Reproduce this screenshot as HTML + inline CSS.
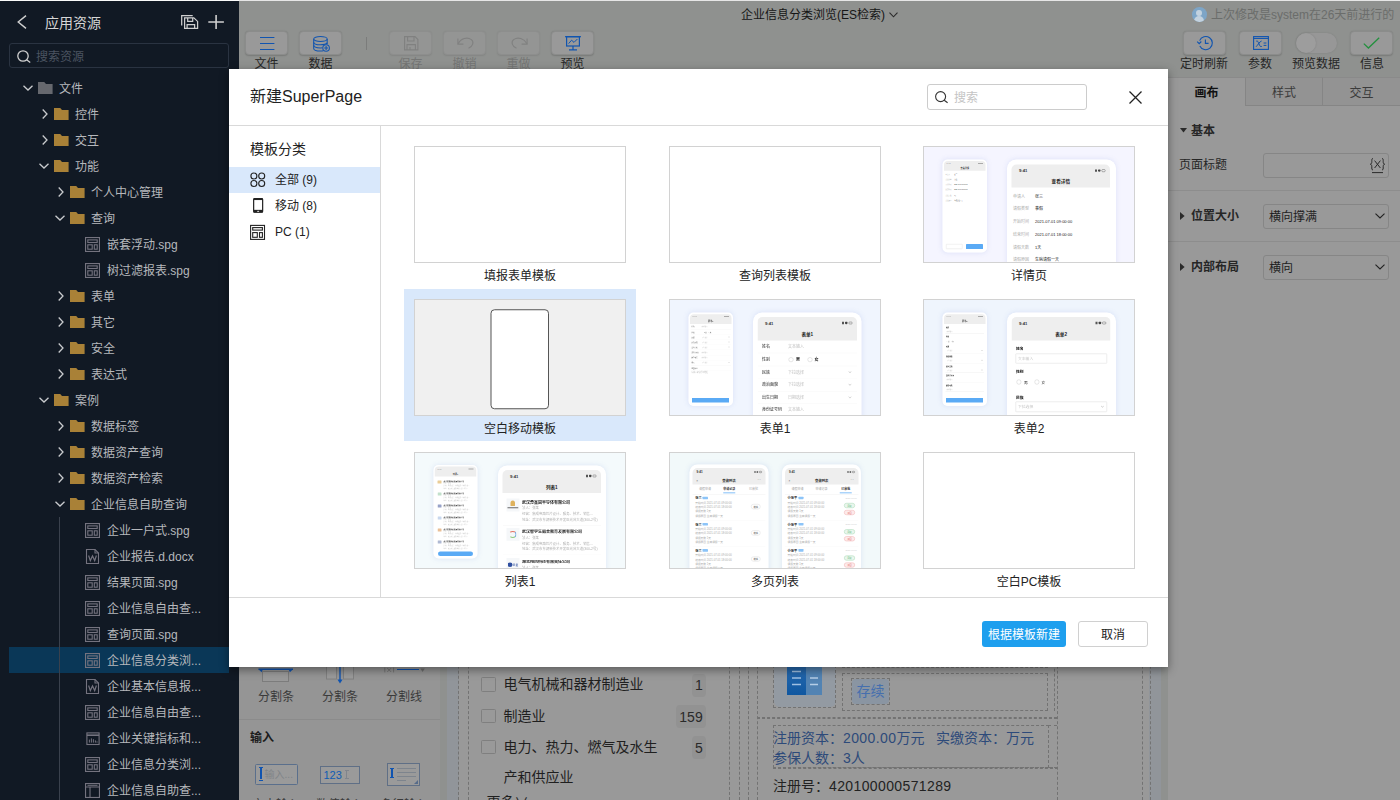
<!DOCTYPE html>
<html lang="zh-CN">
<head>
<meta charset="utf-8">
<title>新建SuperPage</title>
<style>
*{box-sizing:border-box;margin:0;padding:0}
html,body{width:1400px;height:800px;overflow:hidden}
body{position:relative;background:#8f918f;font-family:"Liberation Sans","Noto Sans CJK SC",sans-serif;font-size:12px;color:#333;line-height:1}
.abs{position:absolute}
svg{display:block;overflow:visible}
/* sidebar */
#sb{position:absolute;left:0;top:0;width:239px;height:800px;background:#111924;color:#c4c6c9;overflow:hidden}
#topline{position:absolute;left:0;top:0;width:1400px;height:1px;background:linear-gradient(90deg,#fafafa 0,#fafafa 239px,#e6e6e6 239px,#e6e6e6 100%);z-index:5}
.sbt{position:absolute;left:45px;top:15px;font-size:14px;line-height:16px;color:#d6d6d6}
.sbsearch{position:absolute;left:9px;top:43px;width:220px;height:25px;border:1px solid #2a3341;border-radius:3px}
.sbsearch span{position:absolute;left:26px;top:6px;font-size:12px;line-height:14px;color:#4b5461}
.row{position:absolute;left:9px;width:220px;height:26px}
.row.sel{background:#0a3757}
.row .t{position:absolute;top:7px;font-size:12px;line-height:14px;white-space:nowrap;color:#b6b8bc}
.row svg{position:absolute}
/* main */
.tb{position:absolute;top:31px;width:43px;height:23.5px;border:1px solid #8b8c8b;border-radius:4px;background:#999;box-shadow:0 0.5px 1.5px rgba(0,0,0,0.16)}
.tb.dis{background:#949594;border-color:#8d8e8d;box-shadow:0 0.5px 1.5px rgba(0,0,0,0.08)}
.tbl{position:absolute;top:57px;width:60px;text-align:center;font-size:12px;line-height:14px;color:#262626;white-space:nowrap}
.tbl.dis{color:#747574}
/* right panel */
#rp{position:absolute;left:1168px;top:77px;width:232px;height:723px;background:#999}
.tab{position:absolute;top:0;height:29px;font-size:12px;line-height:14px;text-align:center;padding-top:8px;color:#3b3b3b;border-top:1px solid #8a8a8a}
.tab.off{background:#939393;border-left:1px solid #858585;border-bottom:1px solid #858585}
.rlab{position:absolute;font-size:12px;line-height:14px;color:#262626;white-space:nowrap}
.rbox{position:absolute;left:95px;width:126px;height:25px;border:1px solid #868686;border-radius:3px;font-size:12px;line-height:14px;padding:5px 0 0 5px;color:#1f1f1f}
.rdiv{position:absolute;left:0;width:232px;height:1px;background:#8d8d8d}
/* modal */
#md{position:absolute;left:229px;top:69px;width:939px;height:598px;background:#fff;box-shadow:0 3px 9px rgba(0,0,0,0.42);z-index:10}
#md .title{position:absolute;left:21px;top:19px;font-size:16px;line-height:18px;color:#222;white-space:nowrap}
#md .hline{position:absolute;left:0;top:56px;width:939px;height:1px;background:#d9d9d9}
#md .fline{position:absolute;left:0;top:528px;width:939px;height:1px;background:#d9d9d9}
#md .vline{position:absolute;left:151px;top:57px;width:1px;height:471px;background:#d9d9d9}
#md .search{position:absolute;left:698px;top:15px;width:160px;height:26px;border:1px solid #ccc;border-radius:3px}
#md .search span{position:absolute;left:26px;top:6px;font-size:12px;line-height:14px;color:#c4c4c4}
.cat{position:absolute;left:0;width:151px;height:26px}
.cat.on{background:#d9e8fb}
.cat span{position:absolute;left:46px;top:6px;font-size:12px;line-height:14px;color:#222;white-space:nowrap}
.cat svg{position:absolute;left:21px;top:5px}
.card{position:absolute;width:232px;height:152px}
.card.on{background:#d9e8fb}
.card .th{position:absolute;left:10px;top:10px;width:212px;height:117px;border:1px solid #d2d2d2;background:#fff;overflow:hidden}
.card .lb{position:absolute;left:0;top:133px;width:232px;text-align:center;font-size:12px;line-height:14px;color:#222}
.btn{position:absolute;top:552px;height:26px;border-radius:3px;font-size:12px;line-height:14px;text-align:center;padding-top:7px}
/* thumbs */
.th div,.th span{position:absolute;white-space:nowrap}
.sc{left:0;top:0;width:840px;height:460px;transform:scale(0.25);transform-origin:0 0}
.ph{background:#fff;box-shadow:0 0 22px rgba(110,135,215,0.17)}
.hd{background:#eee}
/* below modal */
#cp{position:absolute;left:239px;top:600px;width:201px;height:200px;background:#959595}
.cpl{position:absolute;width:64px;text-align:center;font-size:12px;line-height:14px;color:#3a3a3a;white-space:nowrap}
#cv{position:absolute;left:447px;top:600px;width:714px;height:200px;background:#999;overflow:hidden}
.dv{position:absolute;top:0;width:0;height:200px;border-left:1px dashed #737373}
.ck{position:absolute;left:34px;width:14.5px;height:14.5px;border:1px solid #7f7f7f;border-radius:1.5px;background:#999}
.ckt{position:absolute;left:56.5px;font-size:14px;line-height:16px;color:#1f1f1f;white-space:nowrap}
.bdg{position:absolute;height:23px;border-radius:4px;background:#929292;font-size:14px;line-height:16px;color:#2a2a2a;padding:3.5px 0 0 0;text-align:center}
.dbox{position:absolute;border:1px dashed #737373}
</style>
</head>
<body>
<div id="topline"></div>
<div id="sb">
<svg class="abs" style="left:17px;top:15px" width="10" height="14" viewBox="0 0 10 14"><path d="M9 0.6L1.2 7L9 13.4" fill="none" stroke="#d0d0d0" stroke-width="1.4"/></svg>
<div class="sbt">应用资源</div>
<svg class="abs" style="left:181px;top:15px" width="17" height="14" viewBox="0 0 17 14" fill="none" stroke="#cfcfcf" stroke-width="1.25"><path d="M0.7 10.4V0.7H11.7"/><path d="M3.6 2.9H12.8L16.6 6.4V13.4H3.6Z"/><path d="M6.7 2.9V6.3H11.7V2.9"/><path d="M6.1 13.4V9.7H13.6V13.4"/></svg>
<svg class="abs" style="left:208px;top:14px" width="16" height="16" viewBox="0 0 16 16"><path d="M8.1 1.1V15M0.3 8H15.9" stroke="#cfcfcf" stroke-width="1.6"/></svg>
<div class="sbsearch"><svg class="abs" style="left:7px;top:6px" width="14" height="13" viewBox="0 0 14 13" fill="none" stroke="#d0d0d0" stroke-width="1.3"><circle cx="6" cy="6" r="5.2"/><path d="M9.6 9.8L13.2 12.6"/></svg><span>搜索资源</span></div>
<div class="abs" style="left:59px;top:517px;width:1px;height:283px;background:#3a414d;z-index:2"></div>
<div class="row" style="top:75px"><svg style="left:14px;top:10px" width="10" height="6" viewBox="0 0 10 6"><path d="M0.5 0.7L5 5L9.5 0.7" fill="none" stroke="#c9cbce" stroke-width="1.3"/></svg><svg style="left:28.8px;top:7px" width="15" height="12" viewBox="0 0 15 12"><path d="M0 0H6.2L8 2H14.6V12H0Z" fill="#66686e"/></svg><span class="t" style="left:50px">文件</span></div>
<div class="row" style="top:101px"><svg style="left:32.8px;top:8px" width="6" height="10" viewBox="0 0 6 10"><path d="M0.7 0.5L5 5L0.7 9.5" fill="none" stroke="#c9cbce" stroke-width="1.3"/></svg><svg style="left:44.8px;top:7px" width="15" height="12" viewBox="0 0 15 12"><path d="M0 0H6.2L8 2H14.6V12H0Z" fill="#a98137"/></svg><span class="t" style="left:66px">控件</span></div>
<div class="row" style="top:127px"><svg style="left:32.8px;top:8px" width="6" height="10" viewBox="0 0 6 10"><path d="M0.7 0.5L5 5L0.7 9.5" fill="none" stroke="#c9cbce" stroke-width="1.3"/></svg><svg style="left:44.8px;top:7px" width="15" height="12" viewBox="0 0 15 12"><path d="M0 0H6.2L8 2H14.6V12H0Z" fill="#a98137"/></svg><span class="t" style="left:66px">交互</span></div>
<div class="row" style="top:153px"><svg style="left:30px;top:10px" width="10" height="6" viewBox="0 0 10 6"><path d="M0.5 0.7L5 5L9.5 0.7" fill="none" stroke="#c9cbce" stroke-width="1.3"/></svg><svg style="left:44.8px;top:7px" width="15" height="12" viewBox="0 0 15 12"><path d="M0 0H6.2L8 2H14.6V12H0Z" fill="#a98137"/></svg><span class="t" style="left:66px">功能</span></div>
<div class="row" style="top:179px"><svg style="left:48.8px;top:8px" width="6" height="10" viewBox="0 0 6 10"><path d="M0.7 0.5L5 5L0.7 9.5" fill="none" stroke="#c9cbce" stroke-width="1.3"/></svg><svg style="left:60.8px;top:7px" width="15" height="12" viewBox="0 0 15 12"><path d="M0 0H6.2L8 2H14.6V12H0Z" fill="#a98137"/></svg><span class="t" style="left:82px">个人中心管理</span></div>
<div class="row" style="top:205px"><svg style="left:46px;top:10px" width="10" height="6" viewBox="0 0 10 6"><path d="M0.5 0.7L5 5L9.5 0.7" fill="none" stroke="#c9cbce" stroke-width="1.3"/></svg><svg style="left:60.8px;top:7px" width="15" height="12" viewBox="0 0 15 12"><path d="M0 0H6.2L8 2H14.6V12H0Z" fill="#a98137"/></svg><span class="t" style="left:82px">查询</span></div>
<div class="row" style="top:231px"><svg style="left:76px;top:6px" width="15" height="15" viewBox="0 0 15 15" fill="none" stroke="#74737f" stroke-width="1.1"><rect x="0.55" y="0.55" width="13.9" height="13.9"/><rect x="2.8" y="2.9" width="9.4" height="2.6"/><rect x="2.8" y="7.8" width="4.4" height="4.4"/><rect x="9.3" y="7.8" width="2.9" height="4.4"/></svg><span class="t" style="left:98px">嵌套浮动.spg</span></div>
<div class="row" style="top:257px"><svg style="left:76px;top:6px" width="15" height="15" viewBox="0 0 15 15" fill="none" stroke="#74737f" stroke-width="1.1"><rect x="0.55" y="0.55" width="13.9" height="13.9"/><rect x="2.8" y="2.9" width="9.4" height="2.6"/><rect x="2.8" y="7.8" width="4.4" height="4.4"/><rect x="9.3" y="7.8" width="2.9" height="4.4"/></svg><span class="t" style="left:98px">树过滤报表.spg</span></div>
<div class="row" style="top:283px"><svg style="left:48.8px;top:8px" width="6" height="10" viewBox="0 0 6 10"><path d="M0.7 0.5L5 5L0.7 9.5" fill="none" stroke="#c9cbce" stroke-width="1.3"/></svg><svg style="left:60.8px;top:7px" width="15" height="12" viewBox="0 0 15 12"><path d="M0 0H6.2L8 2H14.6V12H0Z" fill="#a98137"/></svg><span class="t" style="left:82px">表单</span></div>
<div class="row" style="top:309px"><svg style="left:48.8px;top:8px" width="6" height="10" viewBox="0 0 6 10"><path d="M0.7 0.5L5 5L0.7 9.5" fill="none" stroke="#c9cbce" stroke-width="1.3"/></svg><svg style="left:60.8px;top:7px" width="15" height="12" viewBox="0 0 15 12"><path d="M0 0H6.2L8 2H14.6V12H0Z" fill="#a98137"/></svg><span class="t" style="left:82px">其它</span></div>
<div class="row" style="top:335px"><svg style="left:48.8px;top:8px" width="6" height="10" viewBox="0 0 6 10"><path d="M0.7 0.5L5 5L0.7 9.5" fill="none" stroke="#c9cbce" stroke-width="1.3"/></svg><svg style="left:60.8px;top:7px" width="15" height="12" viewBox="0 0 15 12"><path d="M0 0H6.2L8 2H14.6V12H0Z" fill="#a98137"/></svg><span class="t" style="left:82px">安全</span></div>
<div class="row" style="top:361px"><svg style="left:48.8px;top:8px" width="6" height="10" viewBox="0 0 6 10"><path d="M0.7 0.5L5 5L0.7 9.5" fill="none" stroke="#c9cbce" stroke-width="1.3"/></svg><svg style="left:60.8px;top:7px" width="15" height="12" viewBox="0 0 15 12"><path d="M0 0H6.2L8 2H14.6V12H0Z" fill="#a98137"/></svg><span class="t" style="left:82px">表达式</span></div>
<div class="row" style="top:387px"><svg style="left:30px;top:10px" width="10" height="6" viewBox="0 0 10 6"><path d="M0.5 0.7L5 5L9.5 0.7" fill="none" stroke="#c9cbce" stroke-width="1.3"/></svg><svg style="left:44.8px;top:7px" width="15" height="12" viewBox="0 0 15 12"><path d="M0 0H6.2L8 2H14.6V12H0Z" fill="#a98137"/></svg><span class="t" style="left:66px">案例</span></div>
<div class="row" style="top:413px"><svg style="left:48.8px;top:8px" width="6" height="10" viewBox="0 0 6 10"><path d="M0.7 0.5L5 5L0.7 9.5" fill="none" stroke="#c9cbce" stroke-width="1.3"/></svg><svg style="left:60.8px;top:7px" width="15" height="12" viewBox="0 0 15 12"><path d="M0 0H6.2L8 2H14.6V12H0Z" fill="#a98137"/></svg><span class="t" style="left:82px">数据标签</span></div>
<div class="row" style="top:439px"><svg style="left:48.8px;top:8px" width="6" height="10" viewBox="0 0 6 10"><path d="M0.7 0.5L5 5L0.7 9.5" fill="none" stroke="#c9cbce" stroke-width="1.3"/></svg><svg style="left:60.8px;top:7px" width="15" height="12" viewBox="0 0 15 12"><path d="M0 0H6.2L8 2H14.6V12H0Z" fill="#a98137"/></svg><span class="t" style="left:82px">数据资产查询</span></div>
<div class="row" style="top:465px"><svg style="left:48.8px;top:8px" width="6" height="10" viewBox="0 0 6 10"><path d="M0.7 0.5L5 5L0.7 9.5" fill="none" stroke="#c9cbce" stroke-width="1.3"/></svg><svg style="left:60.8px;top:7px" width="15" height="12" viewBox="0 0 15 12"><path d="M0 0H6.2L8 2H14.6V12H0Z" fill="#a98137"/></svg><span class="t" style="left:82px">数据资产检索</span></div>
<div class="row" style="top:491px"><svg style="left:46px;top:10px" width="10" height="6" viewBox="0 0 10 6"><path d="M0.5 0.7L5 5L9.5 0.7" fill="none" stroke="#c9cbce" stroke-width="1.3"/></svg><svg style="left:60.8px;top:7px" width="15" height="12" viewBox="0 0 15 12"><path d="M0 0H6.2L8 2H14.6V12H0Z" fill="#a98137"/></svg><span class="t" style="left:82px">企业信息自助查询</span></div>
<div class="row" style="top:517px"><svg style="left:76px;top:6px" width="15" height="15" viewBox="0 0 15 15" fill="none" stroke="#74737f" stroke-width="1.1"><rect x="0.55" y="0.55" width="13.9" height="13.9"/><rect x="2.8" y="2.9" width="9.4" height="2.6"/><rect x="2.8" y="7.8" width="4.4" height="4.4"/><rect x="9.3" y="7.8" width="2.9" height="4.4"/></svg><span class="t" style="left:98px">企业一户式.spg</span></div>
<div class="row" style="top:543px"><svg style="left:76px;top:6px" width="15" height="15" viewBox="0 0 15 15" fill="none" stroke="#74737f" stroke-width="1.1"><path d="M1.5 0.55H10L13.5 4V14.45H1.5Z"/><path d="M10 0.55V4H13.5" /><path d="M3.6 6.5L5.3 11.6L7.5 7L9.7 11.6L11.4 6.5" stroke-width="1.2"/></svg><span class="t" style="left:98px">企业报告.d.docx</span></div>
<div class="row" style="top:569px"><svg style="left:76px;top:6px" width="15" height="15" viewBox="0 0 15 15" fill="none" stroke="#74737f" stroke-width="1.1"><rect x="0.55" y="0.55" width="13.9" height="13.9"/><rect x="2.8" y="2.9" width="9.4" height="2.6"/><rect x="2.8" y="7.8" width="4.4" height="4.4"/><rect x="9.3" y="7.8" width="2.9" height="4.4"/></svg><span class="t" style="left:98px">结果页面.spg</span></div>
<div class="row" style="top:595px"><svg style="left:76px;top:6px" width="15" height="15" viewBox="0 0 15 15" fill="none" stroke="#74737f" stroke-width="1.1"><rect x="0.55" y="0.55" width="13.9" height="13.9"/><rect x="2.8" y="2.9" width="9.4" height="2.6"/><rect x="2.8" y="7.8" width="4.4" height="4.4"/><rect x="9.3" y="7.8" width="2.9" height="4.4"/></svg><span class="t" style="left:98px">企业信息自由查...</span></div>
<div class="row" style="top:621px"><svg style="left:76px;top:6px" width="15" height="15" viewBox="0 0 15 15" fill="none" stroke="#74737f" stroke-width="1.1"><rect x="0.55" y="0.55" width="13.9" height="13.9"/><rect x="2.8" y="2.9" width="9.4" height="2.6"/><rect x="2.8" y="7.8" width="4.4" height="4.4"/><rect x="9.3" y="7.8" width="2.9" height="4.4"/></svg><span class="t" style="left:98px">查询页面.spg</span></div>
<div class="row sel" style="top:647px"><svg style="left:76px;top:6px" width="15" height="15" viewBox="0 0 15 15" fill="none" stroke="#74737f" stroke-width="1.1"><rect x="0.55" y="0.55" width="13.9" height="13.9"/><rect x="2.8" y="2.9" width="9.4" height="2.6"/><rect x="2.8" y="7.8" width="4.4" height="4.4"/><rect x="9.3" y="7.8" width="2.9" height="4.4"/></svg><span class="t" style="left:98px">企业信息分类浏...</span></div>
<div class="row" style="top:673px"><svg style="left:76px;top:6px" width="15" height="15" viewBox="0 0 15 15" fill="none" stroke="#74737f" stroke-width="1.1"><path d="M1.5 0.55H10L13.5 4V14.45H1.5Z"/><path d="M10 0.55V4H13.5" /><path d="M3.6 6.5L5.3 11.6L7.5 7L9.7 11.6L11.4 6.5" stroke-width="1.2"/></svg><span class="t" style="left:98px">企业基本信息报...</span></div>
<div class="row" style="top:699px"><svg style="left:76px;top:6px" width="15" height="15" viewBox="0 0 15 15" fill="none" stroke="#74737f" stroke-width="1.1"><rect x="0.55" y="0.55" width="13.9" height="13.9"/><rect x="2.8" y="2.9" width="9.4" height="2.6"/><rect x="2.8" y="7.8" width="4.4" height="4.4"/><rect x="9.3" y="7.8" width="2.9" height="4.4"/></svg><span class="t" style="left:98px">企业信息自由查...</span></div>
<div class="row" style="top:725px"><svg style="left:76px;top:6px" width="15" height="15" viewBox="0 0 15 15" fill="none" stroke="#74737f" stroke-width="1.1"><rect x="1.9" y="1.9" width="12.2" height="11.6"/><path d="M1.9 4.2H14.1" stroke-width="1.6"/><path d="M4.4 11.6V8.6M6.4 11.6V7.4M8.4 11.6V8.2M10.4 11.6V9.4M12 11.6V10.4" stroke-width="1"/></svg><span class="t" style="left:98px">企业关键指标和...</span></div>
<div class="row" style="top:751px"><svg style="left:76px;top:6px" width="15" height="15" viewBox="0 0 15 15" fill="none" stroke="#74737f" stroke-width="1.1"><rect x="0.55" y="0.55" width="13.9" height="13.9"/><rect x="2.8" y="2.9" width="9.4" height="2.6"/><rect x="2.8" y="7.8" width="4.4" height="4.4"/><rect x="9.3" y="7.8" width="2.9" height="4.4"/></svg><span class="t" style="left:98px">企业信息分类浏...</span></div>
<div class="row" style="top:777px"><svg style="left:76px;top:6px" width="15" height="15" viewBox="0 0 15 15" fill="none" stroke="#74737f" stroke-width="1.1"><rect x="0.55" y="0.55" width="13.9" height="13.9"/><path d="M0.5 4H14.5M5 4V14.5"/><path d="M2.5 2.3H12.5" stroke-width="1"/></svg><span class="t" style="left:98px">企业信息自助查...</span></div>
</div>
<div id="main">
<!-- title -->
<div class="abs" style="left:741px;top:8px;font-size:12px;line-height:14px;color:#161616;white-space:nowrap">企业信息分类浏览(ES检索)</div>
<svg class="abs" style="left:888.5px;top:11.5px" width="9" height="6" viewBox="0 0 9 6"><path d="M0.5 0.6L4.5 4.8L8.5 0.6" fill="none" stroke="#2a2a2a" stroke-width="1.1"/></svg>
<!-- left toolbar -->
<div class="tb" style="left:245px"><svg class="abs" style="left:14px;top:4px" width="15" height="15" viewBox="0 0 15 15"><path d="M0 1.5H14.4M0 7.5H14.4M0 13.5H14.4" stroke="#1054b0" stroke-width="1.05"/></svg></div>
<div class="tbl" style="left:236.5px">文件</div>
<div class="tb" style="left:299px"><svg class="abs" style="left:12.5px;top:3.5px" width="17" height="16" viewBox="0 0 17 16" fill="none" stroke="#1054b0" stroke-width="1.05"><ellipse cx="7.45" cy="3" rx="6.75" ry="2.5"/><path d="M0.7 3V12.4C0.7 13.8 3.6 15 7.45 15C8.6 15 9.6 14.9 10.4 14.7"/><path d="M14.2 3V8.2"/><path d="M0.7 6.2C0.7 7.6 3.6 8.8 7.45 8.8C10.6 8.8 13.2 8.1 14.2 6.9"/><path d="M0.7 9.3C0.7 10.7 3.6 11.9 7.45 11.9C8.2 11.9 8.9 11.85 9.5 11.8"/><circle cx="13.1" cy="12" r="3.3" fill="#999"/><path d="M13.1 10.1V13.9M11.2 12H15"/></svg></div>
<div class="tbl" style="left:290.5px">数据</div>
<div class="abs" style="left:366px;top:37px;width:1px;height:13px;background:#7b7c7b"></div>
<div class="tb dis" style="left:389px"><svg class="abs" style="left:14px;top:3.8px" width="15" height="15" viewBox="0 0 15 15" fill="none" stroke="#808180" stroke-width="1.1"><path d="M0.6 0.6H11L13.9 3.5V13.9H0.6Z"/><path d="M3.6 0.6V5H10V0.6"/><path d="M3 13.9V8.6H11.4V13.9"/><path d="M6 11V13.9"/></svg></div>
<div class="tbl dis" style="left:380.5px">保存</div>
<div class="tb dis" style="left:443px"><svg class="abs" style="left:13px;top:5px" width="17" height="12" viewBox="0 0 17 12" fill="none" stroke="#808180" stroke-width="1.1"><path d="M1 6.8C4 1.5 10 -0.5 14.4 2.6C17.2 5 16 9.5 11.5 11.2"/><path d="M0.9 1.6V7.1H6.4"/></svg></div>
<div class="tbl dis" style="left:434.5px">撤销</div>
<div class="tb dis" style="left:497px"><svg class="abs" style="left:13px;top:5px" width="17" height="12" viewBox="0 0 17 12" fill="none" stroke="#808180" stroke-width="1.1"><path d="M16 6.8C13 1.5 7 -0.5 2.6 2.6C-0.2 5 1 9.5 5.5 11.2"/><path d="M16.1 1.6V7.1H10.6"/></svg></div>
<div class="tbl dis" style="left:488.5px">重做</div>
<div class="tb" style="left:551px"><svg class="abs" style="left:13.3px;top:3.8px" width="16" height="15" viewBox="0 0 16 15" fill="none" stroke="#1054b0" stroke-width="1.2"><path d="M0 0.7H16"/><rect x="1.6" y="0.7" width="12.8" height="9.3"/><path d="M8 10V13.6M4 13.9H12"/><path d="M3.6 7.6L6.6 4.2L9 6.4L12.4 3" stroke-width="1"/></svg></div>
<div class="tbl" style="left:542.5px">预览</div>
<!-- right header -->
<div class="abs" style="left:1192px;top:7.3px;width:14.6px;height:14.6px;border-radius:50%;background:#7da5c7;overflow:hidden"><div class="abs" style="left:4.4px;top:2.6px;width:5.8px;height:5.8px;border-radius:50%;background:#c3d2df"></div><div class="abs" style="left:2.2px;top:8.6px;width:10.2px;height:8px;border-radius:5px 5px 0 0;background:#c3d2df"></div></div>
<div class="abs" style="left:1211px;top:8px;font-size:12px;line-height:14px;color:#6b6d6b;white-space:nowrap">上次修改是system在26天前进行的</div>
<div class="tb" style="left:1182.5px"><svg class="abs" style="left:12.5px;top:3px" width="17" height="16" viewBox="0 0 17 16" fill="none" stroke="#1054b0" stroke-width="1.1"><path d="M3.6 5.6A6.6 6.6 0 1 1 3.8 11"/><path d="M1.2 6.6L3.2 8.7L5.3 6.5"/><path d="M9.4 4.4V8.4H12.6"/></svg></div>
<div class="tbl" style="left:1174px">定时刷新</div>
<div class="tb" style="left:1238.5px"><svg class="abs" style="left:13.5px;top:4px" width="16" height="14" viewBox="0 0 16 14" fill="none" stroke="#1054b0" stroke-width="1.1"><rect x="0.6" y="0.6" width="14.8" height="12.8"/><path d="M0.6 2.4H15.4"/><path d="M3.2 5.2C4.6 4.2 5.2 6 6 8C6.8 10 7.4 11.2 8.8 10.4M8.6 5C6.6 5.4 5 9 3 10.8" stroke-width="1"/><path d="M10.6 7H13.4M10.6 9.4H13.4" stroke-width="1"/></svg></div>
<div class="tbl" style="left:1230px">参数</div>
<div class="abs" style="left:1295.5px;top:33px;width:41px;height:20px;border-radius:10px;background:#979797;box-shadow:0 0 2px rgba(0,0,0,0.12)"><div class="abs" style="left:0;top:0;width:20px;height:20px;border-radius:50%;background:#9d9d9d;box-shadow:0 0 2px rgba(0,0,0,0.15)"></div></div>
<div class="tbl" style="left:1286px">预览数据</div>
<div class="tb" style="left:1350px"><svg class="abs" style="left:12px;top:5px" width="17" height="12" viewBox="0 0 17 12" fill="none"><path d="M0.8 6.6L5.4 11L16.2 0.8" stroke="#24903f" stroke-width="1.3"/></svg></div>
<div class="tbl" style="left:1342px">信息</div>
</div>
<div id="cp">
<!-- icons row (top cut by modal) -->
<svg class="abs" style="left:19px;top:60px" width="36" height="24" viewBox="0 0 36 24" fill="none"><path d="M0.5 9.3H35" stroke="#1054b0" stroke-width="1.4"/><path d="M0.5 9.3H5L3.6 12.2ZM35 9.3H30.5L31.9 12.2Z" fill="#1054b0"/><rect x="4.5" y="11.5" width="26" height="10" stroke="#7c7c7c" stroke-width="1" fill="#9a9a9a"/></svg>
<svg class="abs" style="left:86px;top:56px" width="30" height="28" viewBox="0 0 30 28" fill="none"><rect x="1.5" y="0.5" width="10" height="22.5" stroke="#808080" fill="#9b9b9b"/><rect x="18.5" y="0.5" width="10" height="22.5" stroke="#808080" fill="#9b9b9b"/><path d="M15 0V25" stroke="#1054b0" stroke-width="1.4"/><path d="M12.4 23.6H17.6L15 27.6Z" fill="#1054b0"/></svg>
<svg class="abs" style="left:145px;top:65px" width="42" height="10" viewBox="0 0 42 10" fill="none"><path d="M13 4.5H35" stroke="#1054b0" stroke-width="1"/><path d="M36.4 3.6H40.8L38.6 7Z" fill="#707070"/><path d="M0.8 2.6V7.4M9.6 2.6V7.4M3.2 3L7.2 7M7.2 3L3.2 7" stroke="#737373" stroke-width="0.9"/></svg>
<div class="cpl" style="left:5px;top:90px">分割条</div>
<div class="cpl" style="left:69px;top:90px">分割条</div>
<div class="cpl" style="left:133px;top:90px">分割线</div>
<div class="abs" style="left:0;top:119px;width:201px;height:1px;background:#8b8b8b"></div>
<div class="abs" style="left:11px;top:131px;font-size:12px;line-height:14px;font-weight:bold;color:#1c1c1c">输入</div>
<!-- input icons -->
<div class="abs" style="left:16px;top:164px;width:42.5px;height:20.5px;border:1.3px solid #5a6f8c;border-radius:1.5px;background:#9a9a9a"><div class="abs" style="left:2.6px;top:2.2px;width:4.4px;height:13.4px;border-top:1.6px solid #1054b0;border-bottom:1.6px solid #1054b0"><div class="abs" style="left:1.2px;top:0;width:2px;height:10.4px;background:#1054b0"></div></div><span class="abs" style="left:8.6px;top:4.2px;font-size:10px;line-height:12px;color:#808488;white-space:nowrap">输入...</span></div>
<div class="abs" style="left:80.5px;top:165.5px;width:40.5px;height:18px;border:1px solid #5f6f86;background:#9a9a9a"><span class="abs" style="left:3px;top:2.5px;font-size:11px;line-height:12px;color:#0f5cb4;white-space:nowrap">123</span><div class="abs" style="left:24px;top:3.2px;width:4px;height:9.6px;border-top:1px solid #80858c;border-bottom:1px solid #80858c"><div class="abs" style="left:1.5px;top:0;width:1px;height:8px;background:#80858c"></div></div></div>
<div class="abs" style="left:147.5px;top:162.5px;width:33px;height:23.5px;border:1px solid #5f6f86;background:#9a9a9a"><div class="abs" style="left:2.6px;top:4.4px;width:4.4px;height:10.6px;border-top:1.4px solid #1054b0;border-bottom:1.4px solid #1054b0"><div class="abs" style="left:1.3px;top:0;width:1.8px;height:8px;background:#1054b0"></div></div><div class="abs" style="left:9px;top:4.4px;width:19.6px;height:1.6px;background:#7d848d"></div><div class="abs" style="left:9px;top:8.4px;width:19.6px;height:1.6px;background:#7d848d"></div><div class="abs" style="left:9px;top:12.4px;width:19.6px;height:1.6px;background:#7d848d"></div><div class="abs" style="left:9px;top:16.4px;width:9.6px;height:1.6px;background:#7d848d"></div><svg class="abs" style="left:26px;top:16px" width="4" height="4" viewBox="0 0 4 4"><path d="M4 0V4H0Z" fill="#566b89"/></svg></div>
<div class="cpl" style="left:5px;top:197.5px">文本输入</div>
<div class="cpl" style="left:69px;top:197.5px">数值输入</div>
<div class="cpl" style="left:133px;top:197.5px">多行输入</div>
</div>
<div id="cv">
<div class="abs" style="left:0;top:0;width:12px;height:200px;background:#91959a"></div>
<div class="abs" style="left:702px;top:0;width:12px;height:200px;background:#91959a"></div>
<div class="dv" style="left:11px"></div><div class="dv" style="left:21px"></div>
<div class="dv" style="left:282px"></div><div class="dv" style="left:292px"></div><div class="dv" style="left:301px"></div><div class="dv" style="left:310px"></div>
<div class="dv" style="left:610px"></div><div class="dv" style="left:607px;height:111px"></div><div class="dv" style="left:695px"></div><div class="dv" style="left:703px"></div>
<!-- checklist -->
<div class="ck" style="top:77px"></div><div class="ckt" style="top:76px">电气机械和器材制造业</div><div class="bdg" style="left:245px;top:73.5px;width:14px">1</div>
<div class="ck" style="top:108.5px"></div><div class="ckt" style="top:107.5px">制造业</div><div class="bdg" style="left:229px;top:105px;width:30px">159</div>
<div class="ck" style="top:139.5px"></div><div class="ckt" style="top:138.5px">电力、热力、燃气及水生</div><div class="bdg" style="left:245px;top:136px;width:14px">5</div>
<div class="ckt" style="top:169px">产和供应业</div>
<div class="ckt" style="left:39.5px;top:193.5px">更多∨</div>
<!-- right card -->
<div class="abs" style="left:326.5px;top:40px;width:62px;height:66.5px;background:#939aa2;border-radius:6px"></div><div class="dbox" style="left:326px;top:40px;width:63px;height:68px"></div>
<svg class="abs" style="left:339.5px;top:63px" width="35" height="32" viewBox="0 0 35 32"><defs><linearGradient id="bk" x1="0" y1="0" x2="0" y2="1"><stop offset="0" stop-color="#2a6cb0"/><stop offset="1" stop-color="#0f57a0"/></linearGradient></defs><path d="M0 0H19V32H0Z" fill="url(#bk)"/><path d="M19 0.5L35 4.2V32H19Z" fill="#5283b3"/><path d="M5 8.5H14M5 15H14M5 21.5H14" stroke="#9fc0e2" stroke-width="1.6"/><path d="M23 15H31M23 21.5H31" stroke="#b5cde6" stroke-width="1.5"/></svg>
<div class="dbox" style="left:395px;top:73px;width:206px;height:37.5px"></div>
<div class="dbox" style="left:395px;top:40px;width:206px;height:28px;border-top:none"></div>
<div class="abs" style="left:404.5px;top:79px;width:37.5px;height:25px;background:#8a95a2;border-radius:4px"></div><div class="dbox" style="left:403.5px;top:78px;width:39.5px;height:27px"></div>
<div class="abs" style="left:409.5px;top:83px;font-size:14px;line-height:16px;color:#456fae;white-space:nowrap">存续</div>
<div class="abs" style="left:310px;top:117px;width:300px;height:2px;border-top:1px dashed #737373;border-bottom:1px dashed #737373"></div>
<div class="dbox" style="left:325.5px;top:124.5px;width:276px;height:43.5px"></div>
<div class="abs" style="left:601px;top:124.5px;width:9px;height:43.5px;border-top:1px dashed #737373;border-bottom:1px dashed #737373"></div>
<div class="abs" style="left:326px;top:127.5px;font-size:14px;line-height:20.5px;color:#2d4a7a;white-space:nowrap">注册资本：<span style="letter-spacing:0.4px">2000.00</span>万元&nbsp;&nbsp;&nbsp;实缴资本：万元<br>参保人数：3人</div>
<div class="abs" style="left:325.5px;top:167px;width:285px;height:2px;border-top:1px dashed #737373;border-bottom:1px dashed #737373"></div>
<div class="abs" style="left:326px;top:177.5px;font-size:14px;line-height:16px;color:#222;white-space:nowrap">注册号：<span style="letter-spacing:0.38px">420100000571289</span></div>
</div>
<div id="rp">
<div class="tab" style="left:0;width:77px;font-weight:bold;color:#111">画布</div>
<div class="tab off" style="left:77px;width:77px">样式</div>
<div class="tab off" style="left:154px;width:78px">交互</div>
<svg class="abs" style="left:11.5px;top:51px" width="7" height="5" viewBox="0 0 7 5"><path d="M0 0H7L3.5 4.6Z" fill="#2a2a2a"/></svg>
<div class="rlab" style="left:23px;top:46.5px;font-weight:bold">基本</div>
<div class="rlab" style="left:11px;top:80.5px">页面标题</div>
<div class="rbox" style="top:75.5px"><svg class="abs" style="left:106px;top:4px" width="15" height="16" viewBox="0 0 15 16" fill="none" stroke="#2a2a2a" stroke-width="1"><path d="M3 0.5C1.6 0.5 1.8 2 1.8 3.6C1.8 5.2 1.4 6 0.4 6.2C1.4 6.4 1.8 7.2 1.8 8.8C1.8 10.4 1.6 12 3 12"/><path d="M12 0.5C13.4 0.5 13.2 2 13.2 3.6C13.2 5.2 13.6 6 14.6 6.2C13.6 6.4 13.2 7.2 13.2 8.8C13.2 10.4 13.4 12 12 12"/><path d="M4.6 2.6L10.4 10M10.4 2.6L4.6 10"/><path d="M2 14.6H13" /></svg></div>
<div class="rdiv" style="top:113px"></div>
<svg class="abs" style="left:11.5px;top:135px" width="5" height="8" viewBox="0 0 5 8"><path d="M0 0L4.6 4L0 8Z" fill="#2a2a2a"/></svg>
<div class="rlab" style="left:23px;top:132px;font-weight:bold">位置大小</div>
<div class="rbox" style="top:126.5px">横向撑满<svg class="abs" style="left:111px;top:8.5px" width="10" height="6" viewBox="0 0 10 6"><path d="M0.5 0.6L5 5L9.5 0.6" fill="none" stroke="#222" stroke-width="1.1"/></svg></div>
<div class="rdiv" style="top:164px"></div>
<svg class="abs" style="left:11.5px;top:186px" width="5" height="8" viewBox="0 0 5 8"><path d="M0 0L4.6 4L0 8Z" fill="#2a2a2a"/></svg>
<div class="rlab" style="left:23px;top:183px;font-weight:bold">内部布局</div>
<div class="rbox" style="top:177.5px">横向<svg class="abs" style="left:111px;top:8.5px" width="10" height="6" viewBox="0 0 10 6"><path d="M0.5 0.6L5 5L9.5 0.6" fill="none" stroke="#222" stroke-width="1.1"/></svg></div>
</div>
<div id="md">
<div class="title">新建SuperPage</div>
<div class="search"><svg class="abs" style="left:7px;top:6.4px" width="13" height="12" viewBox="0 0 13 12" fill="none" stroke="#333" stroke-width="1.1"><circle cx="5.6" cy="5.6" r="5"/><path d="M9.2 9.2L12.6 11.8"/></svg><span>搜索</span></div>
<svg class="abs" style="left:899.5px;top:21.5px" width="13" height="13" viewBox="0 0 13 13"><path d="M0.5 0.5L12.5 12.5M12.5 0.5L0.5 12.5" stroke="#222" stroke-width="1.3" fill="none"/></svg>
<div class="hline"></div><div class="vline"></div><div class="fline"></div>
<div class="abs" style="left:21px;top:72px;font-size:14px;line-height:16px;color:#222">模板分类</div>
<div class="cat on" style="top:98px"><svg width="16" height="16" viewBox="0 0 16 16" fill="none" stroke="#222" stroke-width="1.1"><circle cx="3.9" cy="4" r="3"/><circle cx="11.7" cy="4" r="3"/><circle cx="3.9" cy="11.5" r="3"/><circle cx="11.7" cy="11.5" r="3"/></svg><span>全部 (9)</span></div>
<div class="cat" style="top:124px"><svg width="16" height="16" viewBox="0 0 16 16" fill="none" stroke="#222" stroke-width="1.2"><rect x="3.65" y="0.6" width="9" height="13.6" rx="0.9"/><path d="M3.6 1.1H12.7" stroke-width="1.9"/><path d="M3.6 13.2H12.7" stroke-width="2.7"/><ellipse cx="8.15" cy="13.2" rx="1.1" ry="0.55" fill="#fff" stroke="none"/></svg><span>移动 (8)</span></div>
<div class="cat" style="top:150px"><svg width="16" height="16" viewBox="0 0 16 16" fill="none" stroke="#222" stroke-width="1.1"><rect x="0.6" y="1.4" width="13.9" height="14"/><rect x="2.7" y="3.6" width="9.7" height="2.5"/><rect x="2.7" y="8.6" width="4.6" height="4.7"/><rect x="9.5" y="8.6" width="2.9" height="4.7"/></svg><span>PC (1)</span></div>
<div class="card" style="left:175px;top:67px"><div class="th" style="background:#fff"></div><div class="lb">填报表单模板</div></div>
<div class="card" style="left:430px;top:67px"><div class="th" style="background:#fff"></div><div class="lb">查询列表模板</div></div>
<div class="card" style="left:684px;top:67px"><div class="th" style="background:#f5f5ff"><div class="sc"><div class="ph" style="left:74.4px;top:49.6px;width:177.6px;height:372.8px;border-radius:20.0px;"></div><div class="hd" style="left:80.0px;top:56.0px;width:166.4px;height:39.2px;border-radius:16.0px 16.0px 0 0;"></div><span style="top:61.5px;font-size:8.0px;line-height:9.6px;color:#888;left:90.4px;">9:41</span><div style="left:216.0px;top:63.6px;width:20.0px;height:4.0px;background:#aaa;"></div><span style="top:79.7px;font-size:8.4px;line-height:10.1px;color:#444;left:43.2px;width:240px;text-align:center;font-weight:bold;">查看详情</span><span style="top:106.8px;font-size:5.8px;line-height:7.0px;color:#aaa;left:86.4px;">申请人</span><span style="top:106.8px;font-size:5.8px;line-height:7.0px;color:#333;left:120.8px;">张三</span><span style="top:126.8px;font-size:5.8px;line-height:7.0px;color:#aaa;left:86.4px;">请假类型</span><span style="top:126.8px;font-size:5.8px;line-height:7.0px;color:#333;left:120.8px;">事假</span><span style="top:147.6px;font-size:5.8px;line-height:7.0px;color:#aaa;left:86.4px;">开始时间</span><span style="top:147.6px;font-size:5.8px;line-height:7.0px;color:#333;left:120.8px;">2021-07-01 09:00:00</span><span style="top:168.4px;font-size:5.8px;line-height:7.0px;color:#aaa;left:86.4px;">结束时间</span><span style="top:168.4px;font-size:5.8px;line-height:7.0px;color:#333;left:120.8px;">2021-07-01 18:00:00</span><span style="top:189.2px;font-size:5.8px;line-height:7.0px;color:#aaa;left:86.4px;">请假天数</span><span style="top:189.2px;font-size:5.8px;line-height:7.0px;color:#333;left:120.8px;">1天</span><span style="top:210.0px;font-size:5.8px;line-height:7.0px;color:#aaa;left:86.4px;">请假原因</span><span style="top:210.0px;font-size:5.8px;line-height:7.0px;color:#333;left:120.8px;">生病请假一天</span><div style="left:88.0px;top:388.0px;width:66.4px;height:20.0px;background:#fff;border:2.0px solid #e2e2e2;border-radius:2.4px;"></div><div style="left:168.0px;top:388.0px;width:68.0px;height:20.0px;background:#5aaaf5;border-radius:2.4px;"></div><div class="ph" style="left:332.0px;top:49.6px;width:436.0px;height:520.0px;border-radius:36.0px;"></div><div class="hd" style="left:350.4px;top:70.4px;width:393.6px;height:91.2px;border-radius:20.0px 20.0px 0 0;"></div><span style="top:85.0px;font-size:16.8px;line-height:20.2px;color:#333;left:380.0px;font-weight:bold;">9:41</span><div style="left:684.0px;top:89.6px;width:8.0px;height:9.6px;background:#555;"></div><div style="left:696.0px;top:89.6px;width:10.4px;height:9.6px;background:#444;border-radius:4.0px 4.0px 8.0px 8.0px;"></div><div style="left:709.6px;top:89.2px;width:16.8px;height:10.4px;border:2.0px solid #666;border-radius:5.2px;"></div><span style="top:127.3px;font-size:18.4px;line-height:22.1px;color:#222;left:427.2px;width:240px;text-align:center;font-weight:bold;">查看详情</span><span style="top:189.5px;font-size:16.0px;line-height:19.2px;color:#aaa;left:356.0px;">申请人</span><span style="top:189.5px;font-size:16.0px;line-height:19.2px;color:#222;left:444.0px;">张三</span><span style="top:237.5px;font-size:16.0px;line-height:19.2px;color:#aaa;left:356.0px;">请假类型</span><span style="top:237.5px;font-size:16.0px;line-height:19.2px;color:#222;left:444.0px;">事假</span><span style="top:288.7px;font-size:16.0px;line-height:19.2px;color:#aaa;left:356.0px;">开始时间</span><span style="top:288.7px;font-size:16.0px;line-height:19.2px;color:#222;left:444.0px;">2021-07-01 09:00:00</span><span style="top:340.7px;font-size:16.0px;line-height:19.2px;color:#aaa;left:356.0px;">结束时间</span><span style="top:340.7px;font-size:16.0px;line-height:19.2px;color:#222;left:444.0px;">2021-07-01 18:00:00</span><span style="top:391.1px;font-size:16.0px;line-height:19.2px;color:#aaa;left:356.0px;">请假天数</span><span style="top:391.1px;font-size:16.0px;line-height:19.2px;color:#222;left:444.0px;">1天</span><span style="top:442.3px;font-size:16.0px;line-height:19.2px;color:#aaa;left:356.0px;">请假原因</span><span style="top:442.3px;font-size:16.0px;line-height:19.2px;color:#222;left:444.0px;">生病请假一天</span></div></div><div class="lb">详情页</div></div>
<div class="card on" style="left:175px;top:220px"><div class="th" style="background:#f0f0f0"><div class="sc"><div style="left:302.4px;top:36.8px;width:233.6px;height:400.0px;background:#fff;border:4.0px solid #555;border-radius:16.0px;"></div></div></div><div class="lb">空白移动模板</div></div>
<div class="card" style="left:430px;top:220px"><div class="th" style="background:#f0f5fe"><div class="sc"><div class="ph" style="left:74.4px;top:50.4px;width:177.6px;height:373.6px;border-radius:20.0px;"></div><div class="hd" style="left:80.0px;top:56.8px;width:166.4px;height:39.2px;border-radius:16.0px 16.0px 0 0;"></div><span style="top:62.3px;font-size:8.0px;line-height:9.6px;color:#888;left:90.4px;">9:41</span><div style="left:216.0px;top:64.4px;width:20.0px;height:4.0px;background:#aaa;"></div><span style="top:80.5px;font-size:8.4px;line-height:10.1px;color:#444;left:43.2px;width:240px;text-align:center;font-weight:bold;">表单1</span><span style="top:103.5px;font-size:6.0px;line-height:7.2px;color:#555;left:86.4px;">姓名</span><span style="top:103.5px;font-size:6.0px;line-height:7.2px;color:#c4c4c4;left:126.4px;">文本输入</span><div style="left:84.0px;top:116.4px;width:160.0px;height:1.2px;background:#f7f7f7;"></div><span style="top:125.1px;font-size:6.0px;line-height:7.2px;color:#555;left:86.4px;">性别</span><span style="top:125.1px;font-size:6.0px;line-height:7.2px;color:#555;left:136.0px;">● 男　○ 女</span><div style="left:84.0px;top:138.0px;width:160.0px;height:1.2px;background:#f7f7f7;"></div><span style="top:145.1px;font-size:6.0px;line-height:7.2px;color:#555;left:86.4px;">民族</span><span style="top:145.1px;font-size:6.0px;line-height:7.2px;color:#c4c4c4;left:126.4px;">下拉选择</span><div style="left:234.0px;top:144.6px;width:4.0px;height:4.0px;border-right:1.0px solid #bbb;border-bottom:1.0px solid #bbb;transform:rotate(45deg);"></div><div style="left:84.0px;top:158.0px;width:160.0px;height:1.2px;background:#f7f7f7;"></div><span style="top:165.1px;font-size:6.0px;line-height:7.2px;color:#555;left:86.4px;">政治面貌</span><span style="top:165.1px;font-size:6.0px;line-height:7.2px;color:#c4c4c4;left:126.4px;">下拉选择</span><div style="left:234.0px;top:164.6px;width:4.0px;height:4.0px;border-right:1.0px solid #bbb;border-bottom:1.0px solid #bbb;transform:rotate(45deg);"></div><div style="left:84.0px;top:178.0px;width:160.0px;height:1.2px;background:#f7f7f7;"></div><span style="top:185.1px;font-size:6.0px;line-height:7.2px;color:#555;left:86.4px;">出生日期</span><span style="top:185.1px;font-size:6.0px;line-height:7.2px;color:#c4c4c4;left:126.4px;">下拉选择</span><div style="left:234.0px;top:184.6px;width:4.0px;height:4.0px;border-right:1.0px solid #bbb;border-bottom:1.0px solid #bbb;transform:rotate(45deg);"></div><div style="left:84.0px;top:198.0px;width:160.0px;height:1.2px;background:#f7f7f7;"></div><span style="top:206.7px;font-size:6.0px;line-height:7.2px;color:#555;left:86.4px;">身份证号码</span><span style="top:206.7px;font-size:6.0px;line-height:7.2px;color:#c4c4c4;left:126.4px;">文本输入</span><div style="left:84.0px;top:219.6px;width:160.0px;height:1.2px;background:#f7f7f7;"></div><span style="top:226.7px;font-size:6.0px;line-height:7.2px;color:#555;left:86.4px;">联系电话</span><span style="top:226.7px;font-size:6.0px;line-height:7.2px;color:#c4c4c4;left:126.4px;">文本输入</span><div style="left:84.0px;top:239.6px;width:160.0px;height:1.2px;background:#f7f7f7;"></div><span style="top:247.5px;font-size:6.0px;line-height:7.2px;color:#555;left:86.4px;">婚否</span><span style="top:247.5px;font-size:6.0px;line-height:7.2px;color:#c4c4c4;left:126.4px;">下拉选择</span><div style="left:234.0px;top:247.0px;width:4.0px;height:4.0px;border-right:1.0px solid #bbb;border-bottom:1.0px solid #bbb;transform:rotate(45deg);"></div><div style="left:84.0px;top:260.4px;width:160.0px;height:1.2px;background:#f7f7f7;"></div><span style="top:269.1px;font-size:6.0px;line-height:7.2px;color:#555;left:86.4px;">家庭地址</span><div style="left:84.0px;top:282.0px;width:160.0px;height:1.2px;background:#f7f7f7;"></div><span style="top:284.4px;font-size:7.2px;line-height:8.6px;color:#bbb;left:86.4px;">请输入家庭详细地址</span><div style="left:88.0px;top:392.0px;width:148.0px;height:18.4px;background:#5aaaf5;"></div><div class="ph" style="left:332.0px;top:50.4px;width:434.4px;height:520.0px;border-radius:36.0px;"></div><div class="hd" style="left:350.4px;top:68.0px;width:397.6px;height:93.6px;border-radius:20.0px 20.0px 0 0;"></div><span style="top:82.6px;font-size:16.8px;line-height:20.2px;color:#333;left:380.0px;font-weight:bold;">9:41</span><div style="left:688.0px;top:87.2px;width:8.0px;height:9.6px;background:#555;"></div><div style="left:700.0px;top:87.2px;width:10.4px;height:9.6px;background:#444;border-radius:4.0px 4.0px 8.0px 8.0px;"></div><div style="left:713.6px;top:86.8px;width:16.8px;height:10.4px;border:2.0px solid #666;border-radius:5.2px;"></div><span style="top:127.3px;font-size:18.4px;line-height:22.1px;color:#222;left:429.2px;width:240px;text-align:center;font-weight:bold;">表单1</span><span style="top:177.5px;font-size:16.0px;line-height:19.2px;color:#222;left:368.0px;">姓名</span><span style="top:177.5px;font-size:16.0px;line-height:19.2px;color:#c0c0c0;left:472.0px;">文本输入</span><div style="left:352.0px;top:211.2px;width:396.0px;height:1.6px;background:#f6f6f6;"></div><span style="top:229.5px;font-size:16.0px;line-height:19.2px;color:#222;left:368.0px;">性别</span><div style="left:474.4px;top:228.8px;width:19.2px;height:19.2px;border:2.0px solid #ccc;border-radius:50%;"></div><span style="top:229.5px;font-size:16.0px;line-height:19.2px;color:#222;left:504.0px;font-weight:bold;">男</span><div style="left:550.4px;top:228.8px;width:19.2px;height:19.2px;border:2.0px solid #ccc;border-radius:50%;"></div><span style="top:229.5px;font-size:16.0px;line-height:19.2px;color:#222;left:578.4px;font-weight:bold;">女</span><div style="left:352.0px;top:263.2px;width:396.0px;height:1.6px;background:#f6f6f6;"></div><span style="top:279.9px;font-size:16.0px;line-height:19.2px;color:#222;left:368.0px;">民族</span><span style="top:279.9px;font-size:16.0px;line-height:19.2px;color:#c0c0c0;left:472.0px;">下拉选择</span><div style="left:716.0px;top:282.0px;width:7.9px;height:7.9px;border-right:1.8px solid #999;border-bottom:1.8px solid #999;transform:rotate(45deg);"></div><div style="left:352.0px;top:313.6px;width:396.0px;height:1.6px;background:#f6f6f6;"></div><span style="top:330.3px;font-size:16.0px;line-height:19.2px;color:#222;left:368.0px;">政治面貌</span><span style="top:330.3px;font-size:16.0px;line-height:19.2px;color:#c0c0c0;left:472.0px;">下拉选择</span><div style="left:716.0px;top:332.4px;width:7.9px;height:7.9px;border-right:1.8px solid #999;border-bottom:1.8px solid #999;transform:rotate(45deg);"></div><div style="left:352.0px;top:364.0px;width:396.0px;height:1.6px;background:#f6f6f6;"></div><span style="top:380.7px;font-size:16.0px;line-height:19.2px;color:#222;left:368.0px;">出生日期</span><span style="top:380.7px;font-size:16.0px;line-height:19.2px;color:#c0c0c0;left:472.0px;">日期选择</span><div style="left:716.0px;top:382.8px;width:7.9px;height:7.9px;border-right:1.8px solid #999;border-bottom:1.8px solid #999;transform:rotate(45deg);"></div><div style="left:352.0px;top:414.4px;width:396.0px;height:1.6px;background:#f6f6f6;"></div><span style="top:429.5px;font-size:16.0px;line-height:19.2px;color:#222;left:368.0px;">身份证号码</span><span style="top:429.5px;font-size:16.0px;line-height:19.2px;color:#c0c0c0;left:472.0px;">文本输入</span><div style="left:352.0px;top:463.2px;width:396.0px;height:1.6px;background:#f6f6f6;"></div></div></div><div class="lb">表单1</div></div>
<div class="card" style="left:684px;top:220px"><div class="th" style="background:#eff5fd"><div class="sc"><div class="ph" style="left:74.4px;top:50.4px;width:177.6px;height:373.6px;border-radius:20.0px;"></div><div class="hd" style="left:80.0px;top:56.8px;width:166.4px;height:39.2px;border-radius:16.0px 16.0px 0 0;"></div><span style="top:62.3px;font-size:8.0px;line-height:9.6px;color:#888;left:90.4px;">9:41</span><div style="left:216.0px;top:64.4px;width:20.0px;height:4.0px;background:#aaa;"></div><span style="top:80.5px;font-size:8.4px;line-height:10.1px;color:#444;left:43.2px;width:240px;text-align:center;font-weight:bold;">表单2</span><span style="top:104.9px;font-size:6.4px;line-height:7.7px;color:#222;left:88.0px;font-weight:bold;">姓名</span><span style="top:121.9px;font-size:6.0px;line-height:7.2px;color:#c4c4c4;left:90.4px;">文本输入</span><div style="left:86.4px;top:134.4px;width:153.6px;height:1.2px;background:#eeeeee;"></div><span style="top:143.3px;font-size:6.4px;line-height:7.7px;color:#222;left:88.0px;font-weight:bold;">性别</span><span style="top:161.1px;font-size:6.0px;line-height:7.2px;color:#777;left:90.4px;">○ 男　○ 女</span><span style="top:183.3px;font-size:6.4px;line-height:7.7px;color:#222;left:88.0px;font-weight:bold;">民族</span><span style="top:200.3px;font-size:6.0px;line-height:7.2px;color:#c4c4c4;left:90.4px;">下拉选择</span><div style="left:86.4px;top:212.8px;width:153.6px;height:1.2px;background:#eeeeee;"></div><div style="left:230.0px;top:199.0px;width:4.0px;height:4.0px;border-right:1.0px solid #aaa;border-bottom:1.0px solid #aaa;transform:rotate(45deg);"></div><span style="top:222.5px;font-size:6.4px;line-height:7.7px;color:#222;left:88.0px;font-weight:bold;">政治面貌</span><span style="top:239.5px;font-size:6.0px;line-height:7.2px;color:#c4c4c4;left:90.4px;">下拉选择</span><div style="left:86.4px;top:252.0px;width:153.6px;height:1.2px;background:#eeeeee;"></div><div style="left:230.0px;top:238.2px;width:4.0px;height:4.0px;border-right:1.0px solid #aaa;border-bottom:1.0px solid #aaa;transform:rotate(45deg);"></div><span style="top:260.9px;font-size:6.4px;line-height:7.7px;color:#222;left:88.0px;font-weight:bold;">出生日期</span><span style="top:277.9px;font-size:6.0px;line-height:7.2px;color:#c4c4c4;left:90.4px;">下拉选择</span><div style="left:86.4px;top:290.4px;width:153.6px;height:1.2px;background:#eeeeee;"></div><div style="left:230.0px;top:276.6px;width:4.0px;height:4.0px;border-right:1.0px solid #aaa;border-bottom:1.0px solid #aaa;transform:rotate(45deg);"></div><span style="top:298.5px;font-size:6.4px;line-height:7.7px;color:#222;left:88.0px;font-weight:bold;">身份证号码</span><span style="top:315.5px;font-size:6.0px;line-height:7.2px;color:#c4c4c4;left:90.4px;">文本输入</span><div style="left:86.4px;top:328.0px;width:153.6px;height:1.2px;background:#eeeeee;"></div><span style="top:336.9px;font-size:6.4px;line-height:7.7px;color:#222;left:88.0px;font-weight:bold;">联系电话</span><span style="top:353.9px;font-size:6.0px;line-height:7.2px;color:#c4c4c4;left:90.4px;">文本输入</span><div style="left:86.4px;top:366.4px;width:153.6px;height:1.2px;background:#eeeeee;"></div><div style="left:88.0px;top:392.0px;width:148.0px;height:18.4px;background:#5aaaf5;"></div><div class="ph" style="left:332.0px;top:50.4px;width:436.0px;height:520.0px;border-radius:36.0px;"></div><div class="hd" style="left:350.4px;top:68.0px;width:396.0px;height:93.6px;border-radius:20.0px 20.0px 0 0;"></div><span style="top:82.6px;font-size:16.8px;line-height:20.2px;color:#333;left:380.0px;font-weight:bold;">9:41</span><div style="left:686.4px;top:87.2px;width:8.0px;height:9.6px;background:#555;"></div><div style="left:698.4px;top:87.2px;width:10.4px;height:9.6px;background:#444;border-radius:4.0px 4.0px 8.0px 8.0px;"></div><div style="left:712.0px;top:86.8px;width:16.8px;height:10.4px;border:2.0px solid #666;border-radius:5.2px;"></div><span style="top:127.3px;font-size:18.4px;line-height:22.1px;color:#222;left:428.4px;width:240px;text-align:center;font-weight:bold;">表单2</span><span style="top:186.0px;font-size:15.2px;line-height:18.2px;color:#111;left:368.0px;font-weight:bold;">姓名</span><div style="left:365.6px;top:213.6px;width:366.4px;height:40.0px;border:2.0px solid #ddd;border-radius:2.4px;"></div><span style="top:225.2px;font-size:15.2px;line-height:18.2px;color:#c4c4c4;left:376.0px;">文本输入</span><span style="top:278.0px;font-size:15.2px;line-height:18.2px;color:#111;left:368.0px;font-weight:bold;">性别</span><div style="left:369.6px;top:318.4px;width:19.2px;height:19.2px;border:2.0px solid #ccc;border-radius:50%;"></div><span style="top:319.6px;font-size:15.2px;line-height:18.2px;color:#222;left:400.0px;">男</span><div style="left:441.6px;top:318.4px;width:19.2px;height:19.2px;border:2.0px solid #ccc;border-radius:50%;"></div><span style="top:319.6px;font-size:15.2px;line-height:18.2px;color:#222;left:470.4px;">女</span><span style="top:379.6px;font-size:15.2px;line-height:18.2px;color:#111;left:368.0px;font-weight:bold;">民族</span><div style="left:365.6px;top:406.4px;width:366.4px;height:41.6px;border:2.0px solid #ddd;border-radius:2.4px;"></div><span style="top:418.8px;font-size:15.2px;line-height:18.2px;color:#c4c4c4;left:376.0px;">下拉选择</span><div style="left:709.6px;top:419.6px;width:7.9px;height:7.9px;border-right:1.8px solid #999;border-bottom:1.8px solid #999;transform:rotate(45deg);"></div></div></div><div class="lb">表单2</div></div>
<div class="card" style="left:175px;top:373px"><div class="th" style="background:#f4fafc"><div class="sc"><div class="ph" style="left:73.6px;top:48.0px;width:176.8px;height:373.6px;border-radius:20.0px;"></div><div class="hd" style="left:79.2px;top:54.4px;width:165.6px;height:39.2px;border-radius:16.0px 16.0px 0 0;"></div><span style="top:59.9px;font-size:8.0px;line-height:9.6px;color:#888;left:89.6px;">9:41</span><div style="left:214.4px;top:62.0px;width:20.0px;height:4.0px;background:#aaa;"></div><span style="top:78.1px;font-size:8.4px;line-height:10.1px;color:#444;left:42.0px;width:240px;text-align:center;font-weight:bold;">列表1</span><div style="left:89.6px;top:109.6px;width:16.8px;height:12.8px;background:#d9a441;opacity:0.55;border-radius:2.0px;"></div><span style="top:108.6px;font-size:6.8px;line-height:8.2px;color:#333;left:114.4px;font-weight:bold;">武汉某某科技发展有限公司</span><span style="top:119.6px;font-size:5.8px;line-height:7.0px;color:#bbb;left:114.4px;">法人：某某</span><span style="top:128.4px;font-size:5.8px;line-height:7.0px;color:#bbb;left:114.4px;">经营：技术开发、技术服务、技术咨询…</span><span style="top:137.2px;font-size:5.8px;line-height:7.0px;color:#bbb;left:114.4px;">地址：武汉市东湖新技术开发区光谷…</span><div style="left:89.6px;top:157.6px;width:16.8px;height:12.8px;background:#8fc7a0;opacity:0.55;border-radius:2.0px;"></div><span style="top:156.6px;font-size:6.8px;line-height:8.2px;color:#333;left:114.4px;font-weight:bold;">武汉某某科技发展有限公司</span><span style="top:167.6px;font-size:5.8px;line-height:7.0px;color:#bbb;left:114.4px;">法人：某某</span><span style="top:176.4px;font-size:5.8px;line-height:7.0px;color:#bbb;left:114.4px;">经营：技术开发、技术服务、技术咨询…</span><span style="top:185.2px;font-size:5.8px;line-height:7.0px;color:#bbb;left:114.4px;">地址：武汉市东湖新技术开发区光谷…</span><div style="left:89.6px;top:205.6px;width:16.8px;height:12.8px;background:#41559a;opacity:0.55;border-radius:2.0px;"></div><span style="top:204.6px;font-size:6.8px;line-height:8.2px;color:#333;left:114.4px;font-weight:bold;">武汉某某科技发展有限公司</span><span style="top:215.6px;font-size:5.8px;line-height:7.0px;color:#bbb;left:114.4px;">法人：某某</span><span style="top:224.4px;font-size:5.8px;line-height:7.0px;color:#bbb;left:114.4px;">经营：技术开发、技术服务、技术咨询…</span><span style="top:233.2px;font-size:5.8px;line-height:7.0px;color:#bbb;left:114.4px;">地址：武汉市东湖新技术开发区光谷…</span><div style="left:89.6px;top:253.6px;width:16.8px;height:12.8px;background:#9bb6e0;opacity:0.55;border-radius:2.0px;"></div><span style="top:252.6px;font-size:6.8px;line-height:8.2px;color:#333;left:114.4px;font-weight:bold;">武汉某某科技发展有限公司</span><span style="top:263.6px;font-size:5.8px;line-height:7.0px;color:#bbb;left:114.4px;">法人：某某</span><span style="top:272.4px;font-size:5.8px;line-height:7.0px;color:#bbb;left:114.4px;">经营：技术开发、技术服务、技术咨询…</span><span style="top:281.2px;font-size:5.8px;line-height:7.0px;color:#bbb;left:114.4px;">地址：武汉市东湖新技术开发区光谷…</span><div style="left:89.6px;top:301.6px;width:16.8px;height:12.8px;background:#d98c41;opacity:0.55;border-radius:2.0px;"></div><span style="top:300.6px;font-size:6.8px;line-height:8.2px;color:#333;left:114.4px;font-weight:bold;">武汉某某科技发展有限公司</span><span style="top:311.6px;font-size:5.8px;line-height:7.0px;color:#bbb;left:114.4px;">法人：某某</span><span style="top:320.4px;font-size:5.8px;line-height:7.0px;color:#bbb;left:114.4px;">经营：技术开发、技术服务、技术咨询…</span><span style="top:329.2px;font-size:5.8px;line-height:7.0px;color:#bbb;left:114.4px;">地址：武汉市东湖新技术开发区光谷…</span><div style="left:89.6px;top:349.6px;width:16.8px;height:12.8px;background:#6d7fae;opacity:0.55;border-radius:2.0px;"></div><span style="top:348.6px;font-size:6.8px;line-height:8.2px;color:#333;left:114.4px;font-weight:bold;">武汉某某科技发展有限公司</span><span style="top:359.6px;font-size:5.8px;line-height:7.0px;color:#bbb;left:114.4px;">法人：某某</span><span style="top:368.4px;font-size:5.8px;line-height:7.0px;color:#bbb;left:114.4px;">经营：技术开发、技术服务、技术咨询…</span><span style="top:377.2px;font-size:5.8px;line-height:7.0px;color:#bbb;left:114.4px;">地址：武汉市东湖新技术开发区光谷…</span><div style="left:92.0px;top:393.6px;width:140.0px;height:18.4px;background:#5aaaf5;border-radius:9.2px;"></div><div class="ph" style="left:332.0px;top:50.4px;width:432.0px;height:520.0px;border-radius:36.0px;"></div><div class="hd" style="left:350.4px;top:68.0px;width:393.6px;height:92.0px;border-radius:20.0px 20.0px 0 0;"></div><span style="top:82.6px;font-size:16.8px;line-height:20.2px;color:#333;left:380.0px;font-weight:bold;">9:41</span><div style="left:684.0px;top:87.2px;width:8.0px;height:9.6px;background:#555;"></div><div style="left:696.0px;top:87.2px;width:10.4px;height:9.6px;background:#444;border-radius:4.0px 4.0px 8.0px 8.0px;"></div><div style="left:709.6px;top:86.8px;width:16.8px;height:10.4px;border:2.0px solid #666;border-radius:5.2px;"></div><span style="top:125.7px;font-size:18.4px;line-height:22.1px;color:#222;left:427.2px;width:240px;text-align:center;font-weight:bold;">列表1</span><div style="left:365.6px;top:182.4px;width:52.0px;height:51.2px;background:#f5f7f9;"></div><div style="left:381.6px;top:190.4px;width:18.4px;height:21.6px;background:#d9a441;border-radius:50% 50% 10% 10%;opacity:0.85;"></div><div style="left:370.4px;top:216.8px;width:42.4px;height:4.0px;background:#444;opacity:0.8;"></div><span style="top:187.9px;font-size:16.0px;line-height:19.2px;color:#222;left:428.0px;font-weight:bold;">武汉奇鑫圆半导体有限公司</span><span style="top:212.5px;font-size:13.6px;line-height:16.3px;color:#aaa;left:428.0px;">法人：张某</span><span style="top:236.5px;font-size:13.6px;line-height:16.3px;color:#b0b0b0;left:428.0px;">经营：集成电路芯片设计、服务、技术、销售…</span><span style="top:258.9px;font-size:13.6px;line-height:16.3px;color:#b0b0b0;left:428.0px;">地址：武汉市东湖新技术开发区光谷大道(300-2号)</span><div style="left:352.0px;top:288.0px;width:392.0px;height:1.6px;background:#f4f4f4;"></div><div style="left:365.6px;top:300.0px;width:52.0px;height:51.2px;background:#f5f7f9;"></div><div style="left:376.0px;top:312.0px;width:30.4px;height:28.0px;border-radius:50%;border:4.4px solid transparent;border-top-color:#e25c4a;border-right-color:#4a90d9;border-bottom-color:#7cc36a;opacity:0.85;"></div><span style="top:305.5px;font-size:16.0px;line-height:19.2px;color:#222;left:428.0px;font-weight:bold;">武汉智学生融合教育发展有限公司</span><span style="top:330.1px;font-size:13.6px;line-height:16.3px;color:#aaa;left:428.0px;">法人：张某</span><span style="top:354.1px;font-size:13.6px;line-height:16.3px;color:#b0b0b0;left:428.0px;">经营：集成电路芯片设计、服务、技术、销售…</span><span style="top:376.5px;font-size:13.6px;line-height:16.3px;color:#b0b0b0;left:428.0px;">地址：武汉市东湖新技术开发区光谷大道(300-2号)</span><div style="left:352.0px;top:405.6px;width:392.0px;height:1.6px;background:#f4f4f4;"></div><div style="left:365.6px;top:420.0px;width:52.0px;height:51.2px;background:#f5f7f9;"></div><div style="left:369.6px;top:437.6px;width:20.8px;height:18.4px;background:#2f4fa0;border-radius:50%;"></div><span style="top:441.7px;font-size:10.4px;line-height:12.5px;color:#2f4fa0;left:391.2px;font-weight:bold;">凤云</span><span style="top:425.5px;font-size:16.0px;line-height:19.2px;color:#222;left:428.0px;font-weight:bold;">湖北翔凤科技有限责任公司</span><span style="top:450.1px;font-size:13.6px;line-height:16.3px;color:#aaa;left:428.0px;">法人：张某</span><span style="top:474.1px;font-size:13.6px;line-height:16.3px;color:#b0b0b0;left:428.0px;">经营：集成电路芯片设计、服务、技术、销售…</span><span style="top:496.5px;font-size:13.6px;line-height:16.3px;color:#b0b0b0;left:428.0px;">地址：武汉市东湖新技术开发区光谷大道(300-2号)</span><div style="left:352.0px;top:525.6px;width:392.0px;height:1.6px;background:#f4f4f4;"></div></div></div><div class="lb">列表1</div></div>
<div class="card" style="left:430px;top:373px"><div class="th" style="background:#f2f9fa"><div class="sc"><div class="ph" style="left:77.6px;top:45.6px;width:316.8px;height:542.4px;border-radius:32.0px;"></div><div class="hd" style="left:90.4px;top:60.0px;width:291.2px;height:65.6px;border-radius:20.0px 20.0px 0 0;"></div><span style="top:69.4px;font-size:12.1px;line-height:14.5px;color:#333;left:106.4px;font-weight:bold;">9:41</span><div style="left:337.3px;top:72.5px;width:5.8px;height:6.9px;background:#555;"></div><div style="left:345.9px;top:72.5px;width:7.5px;height:6.9px;background:#444;border-radius:4.0px 4.0px 8.0px 8.0px;"></div><div style="left:355.7px;top:72.3px;width:12.1px;height:7.5px;border:2.0px solid #666;border-radius:5.2px;"></div><span style="top:102.1px;font-size:13.6px;line-height:16.3px;color:#222;left:116.0px;width:240px;text-align:center;font-weight:bold;">查询列表</span><span style="top:103.1px;font-size:12.0px;line-height:14.4px;color:#555;left:104.8px;">×</span><span style="top:101.3px;font-size:13.6px;line-height:16.3px;color:#555;left:349.6px;">···</span><span style="top:137.5px;font-size:12.0px;line-height:14.4px;color:#aaa;left:20.0px;width:240px;text-align:center;">请假申请</span><span style="top:137.5px;font-size:12.0px;line-height:14.4px;color:#222;left:116.8px;width:240px;text-align:center;font-weight:bold;">申请记录</span><div style="left:212.8px;top:158.4px;width:48.0px;height:2.4px;background:#5aaaf5;"></div><span style="top:137.5px;font-size:12.0px;line-height:14.4px;color:#aaa;left:213.6px;width:240px;text-align:center;">已审批</span><div style="left:90.4px;top:166.4px;width:291.2px;height:1.2px;background:#f0f0f0;"></div><span style="top:173.0px;font-size:12.8px;line-height:15.4px;color:#222;left:100.8px;font-weight:bold;">张三</span><div style="left:130.4px;top:174.8px;width:21.6px;height:10.4px;background:#8cc4f8;border-radius:1.6px;"></div><span style="top:192.6px;font-size:10.8px;line-height:13.0px;color:#aaa;left:100.8px;">开始时间  2021-07-01 09:00:00</span><span style="top:210.0px;font-size:10.8px;line-height:13.0px;color:#aaa;left:100.8px;">结束时间  2021-07-01 18:00:00</span><span style="top:227.4px;font-size:10.8px;line-height:13.0px;color:#aaa;left:100.8px;">请假天数  1天</span><span style="top:244.8px;font-size:10.8px;line-height:13.0px;color:#aaa;left:100.8px;">请假原因  生病请假一天</span><div style="left:324.0px;top:204.0px;width:38.4px;height:20.8px;border:2.0px solid #ddd;border-radius:10.4px;"></div><span style="top:209.8px;font-size:8.8px;line-height:10.6px;color:#666;left:223.2px;width:240px;text-align:center;">撤销</span><div style="left:90.4px;top:268.0px;width:291.2px;height:1.2px;background:#f2f2f2;"></div><span style="top:277.8px;font-size:12.8px;line-height:15.4px;color:#222;left:100.8px;font-weight:bold;">张三</span><div style="left:130.4px;top:279.6px;width:21.6px;height:10.4px;background:#8cc4f8;border-radius:1.6px;"></div><span style="top:297.4px;font-size:10.8px;line-height:13.0px;color:#aaa;left:100.8px;">开始时间  2021-07-01 09:00:00</span><span style="top:314.8px;font-size:10.8px;line-height:13.0px;color:#aaa;left:100.8px;">结束时间  2021-07-01 18:00:00</span><span style="top:332.2px;font-size:10.8px;line-height:13.0px;color:#aaa;left:100.8px;">请假天数  1天</span><span style="top:349.6px;font-size:10.8px;line-height:13.0px;color:#aaa;left:100.8px;">请假原因  生病请假一天</span><div style="left:324.0px;top:308.8px;width:38.4px;height:20.8px;border:2.0px solid #ddd;border-radius:10.4px;"></div><span style="top:314.6px;font-size:8.8px;line-height:10.6px;color:#666;left:223.2px;width:240px;text-align:center;">撤销</span><div style="left:90.4px;top:372.8px;width:291.2px;height:1.2px;background:#f2f2f2;"></div><span style="top:382.6px;font-size:12.8px;line-height:15.4px;color:#222;left:100.8px;font-weight:bold;">张三</span><div style="left:130.4px;top:384.4px;width:21.6px;height:10.4px;background:#8cc4f8;border-radius:1.6px;"></div><span style="top:402.2px;font-size:10.8px;line-height:13.0px;color:#aaa;left:100.8px;">开始时间  2021-07-01 09:00:00</span><span style="top:419.6px;font-size:10.8px;line-height:13.0px;color:#aaa;left:100.8px;">结束时间  2021-07-01 18:00:00</span><span style="top:437.0px;font-size:10.8px;line-height:13.0px;color:#aaa;left:100.8px;">请假天数  1天</span><span style="top:454.4px;font-size:10.8px;line-height:13.0px;color:#aaa;left:100.8px;">请假原因  生病请假一天</span><div style="left:324.0px;top:413.6px;width:38.4px;height:20.8px;border:2.0px solid #ddd;border-radius:10.4px;"></div><span style="top:419.4px;font-size:8.8px;line-height:10.6px;color:#666;left:223.2px;width:240px;text-align:center;">撤销</span><div style="left:90.4px;top:477.6px;width:291.2px;height:1.2px;background:#f2f2f2;"></div><div class="ph" style="left:448.0px;top:45.6px;width:316.0px;height:542.4px;border-radius:32.0px;"></div><div class="hd" style="left:460.0px;top:60.0px;width:293.6px;height:65.6px;border-radius:20.0px 20.0px 0 0;"></div><span style="top:69.4px;font-size:12.1px;line-height:14.5px;color:#333;left:476.0px;font-weight:bold;">9:41</span><div style="left:709.3px;top:72.5px;width:5.8px;height:6.9px;background:#555;"></div><div style="left:717.9px;top:72.5px;width:7.5px;height:6.9px;background:#444;border-radius:4.0px 4.0px 8.0px 8.0px;"></div><div style="left:727.7px;top:72.3px;width:12.1px;height:7.5px;border:2.0px solid #666;border-radius:5.2px;"></div><span style="top:102.1px;font-size:13.6px;line-height:16.3px;color:#222;left:486.8px;width:240px;text-align:center;font-weight:bold;">查询列表</span><span style="top:103.1px;font-size:12.0px;line-height:14.4px;color:#555;left:474.4px;">×</span><span style="top:101.3px;font-size:13.6px;line-height:16.3px;color:#555;left:721.6px;">···</span><span style="top:137.5px;font-size:12.0px;line-height:14.4px;color:#aaa;left:389.6px;width:240px;text-align:center;">请假申请</span><span style="top:137.5px;font-size:12.0px;line-height:14.4px;color:#aaa;left:486.4px;width:240px;text-align:center;">申请记录</span><span style="top:137.5px;font-size:12.0px;line-height:14.4px;color:#222;left:583.2px;width:240px;text-align:center;font-weight:bold;">已审批</span><div style="left:679.2px;top:158.4px;width:48.0px;height:2.4px;background:#5aaaf5;"></div><div style="left:460.0px;top:166.4px;width:293.6px;height:1.2px;background:#f0f0f0;"></div><span style="top:173.0px;font-size:12.8px;line-height:15.4px;color:#222;left:470.4px;font-weight:bold;">小张平</span><div style="left:514.4px;top:174.8px;width:20.0px;height:10.4px;background:#8cc4f8;border-radius:1.6px;"></div><span style="top:192.6px;font-size:10.8px;line-height:13.0px;color:#aaa;left:470.4px;">开始时间  2021-07-01 09:00:00</span><span style="top:210.0px;font-size:10.8px;line-height:13.0px;color:#aaa;left:470.4px;">结束时间  2021-07-01 18:00:00</span><span style="top:227.4px;font-size:10.8px;line-height:13.0px;color:#aaa;left:470.4px;">请假天数  1天</span><span style="top:244.8px;font-size:10.8px;line-height:13.0px;color:#aaa;left:470.4px;">请假原因  生病请假一天</span><span style="top:175.4px;font-size:8.8px;line-height:10.6px;color:#ccc;right:92.8px;">2021-07-01</span><div style="left:696.0px;top:200.0px;width:44.0px;height:20.0px;background:#e8f6ec;border:2.0px solid #a7d9b5;border-radius:10.0px;"></div><span style="top:205.7px;font-size:8.4px;line-height:10.1px;color:#4caf6a;left:598.0px;width:240px;text-align:center;">同意</span><div style="left:696.0px;top:228.0px;width:44.0px;height:20.0px;background:#fdeaea;border:2.0px solid #f0b0b0;border-radius:10.0px;"></div><span style="top:233.7px;font-size:8.4px;line-height:10.1px;color:#e06060;left:598.0px;width:240px;text-align:center;">驳回</span><div style="left:460.0px;top:268.0px;width:293.6px;height:1.2px;background:#f2f2f2;"></div><span style="top:277.8px;font-size:12.8px;line-height:15.4px;color:#222;left:470.4px;font-weight:bold;">小张平</span><div style="left:514.4px;top:279.6px;width:20.0px;height:10.4px;background:#8cc4f8;border-radius:1.6px;"></div><span style="top:297.4px;font-size:10.8px;line-height:13.0px;color:#aaa;left:470.4px;">开始时间  2021-07-01 09:00:00</span><span style="top:314.8px;font-size:10.8px;line-height:13.0px;color:#aaa;left:470.4px;">结束时间  2021-07-01 18:00:00</span><span style="top:332.2px;font-size:10.8px;line-height:13.0px;color:#aaa;left:470.4px;">请假天数  1天</span><span style="top:349.6px;font-size:10.8px;line-height:13.0px;color:#aaa;left:470.4px;">请假原因  生病请假一天</span><span style="top:280.2px;font-size:8.8px;line-height:10.6px;color:#ccc;right:92.8px;">2021-07-01</span><div style="left:696.0px;top:304.8px;width:44.0px;height:20.0px;background:#e8f6ec;border:2.0px solid #a7d9b5;border-radius:10.0px;"></div><span style="top:310.5px;font-size:8.4px;line-height:10.1px;color:#4caf6a;left:598.0px;width:240px;text-align:center;">同意</span><div style="left:696.0px;top:332.8px;width:44.0px;height:20.0px;background:#fdeaea;border:2.0px solid #f0b0b0;border-radius:10.0px;"></div><span style="top:338.5px;font-size:8.4px;line-height:10.1px;color:#e06060;left:598.0px;width:240px;text-align:center;">驳回</span><div style="left:460.0px;top:372.8px;width:293.6px;height:1.2px;background:#f2f2f2;"></div><span style="top:382.6px;font-size:12.8px;line-height:15.4px;color:#222;left:470.4px;font-weight:bold;">小张平</span><div style="left:514.4px;top:384.4px;width:20.0px;height:10.4px;background:#8cc4f8;border-radius:1.6px;"></div><span style="top:402.2px;font-size:10.8px;line-height:13.0px;color:#aaa;left:470.4px;">开始时间  2021-07-01 09:00:00</span><span style="top:419.6px;font-size:10.8px;line-height:13.0px;color:#aaa;left:470.4px;">结束时间  2021-07-01 18:00:00</span><span style="top:437.0px;font-size:10.8px;line-height:13.0px;color:#aaa;left:470.4px;">请假天数  1天</span><span style="top:454.4px;font-size:10.8px;line-height:13.0px;color:#aaa;left:470.4px;">请假原因  生病请假一天</span><span style="top:385.0px;font-size:8.8px;line-height:10.6px;color:#ccc;right:92.8px;">2021-07-01</span><div style="left:696.0px;top:409.6px;width:44.0px;height:20.0px;background:#e8f6ec;border:2.0px solid #a7d9b5;border-radius:10.0px;"></div><span style="top:415.3px;font-size:8.4px;line-height:10.1px;color:#4caf6a;left:598.0px;width:240px;text-align:center;">同意</span><div style="left:696.0px;top:437.6px;width:44.0px;height:20.0px;background:#fdeaea;border:2.0px solid #f0b0b0;border-radius:10.0px;"></div><span style="top:443.3px;font-size:8.4px;line-height:10.1px;color:#e06060;left:598.0px;width:240px;text-align:center;">驳回</span><div style="left:460.0px;top:477.6px;width:293.6px;height:1.2px;background:#f2f2f2;"></div></div></div><div class="lb">多页列表</div></div>
<div class="card" style="left:684px;top:373px"><div class="th" style="background:#fff"></div><div class="lb">空白PC模板</div></div>
<div class="btn" style="left:753px;width:84px;background:#1e9fee;color:#fff">根据模板新建</div>
<div class="btn" style="left:849px;width:70px;border:1px solid #d0d0d0;color:#222;padding-top:6px">取消</div>
</div>
</body>
</html>
